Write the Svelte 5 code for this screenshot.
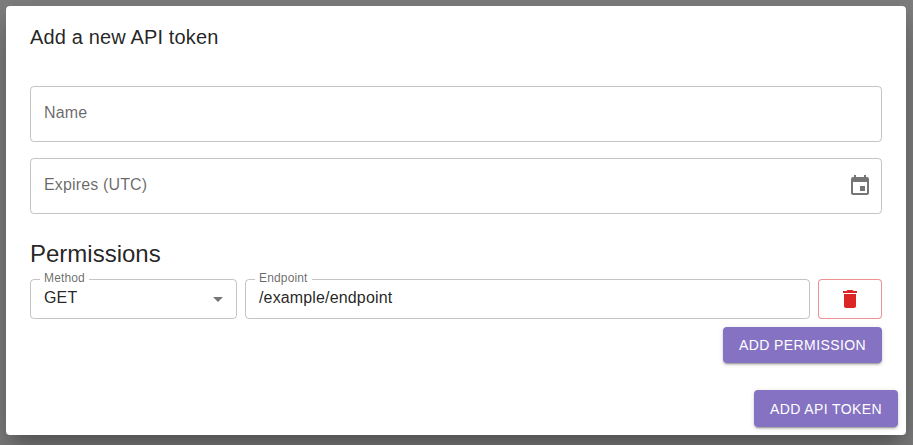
<script>
  let name = $state('');
  let expires = $state('');
  let endpoint = $state('/example/endpoint');
</script>

<div class="backdrop">
  <div class="dialog">
    <h2 class="title">Add a new API token</h2>

    <div class="content">
      <label class="field large">
        <input type="text" placeholder="Name" bind:value={name} />
      </label>

      <label class="field large">
        <input type="text" placeholder="Expires (UTC)" bind:value={expires} />
        <svg class="calendar" viewBox="0 0 24 24" width="24" height="24" aria-hidden="true">
          <path d="M17 12h-5v5h5v-5zM16 1v2H8V1H6v2H5c-1.11 0-1.99.9-1.99 2L3 19c0 1.1.89 2 2 2h14c1.1 0 2-.9 2-2V5c0-1.1-.9-2-2-2h-1V1h-2zm3 18H5V8h14v11z" />
        </svg>
      </label>

      <h3 class="heading">Permissions</h3>

      <div class="permission">
        <div class="field small method">
          <span class="legend">Method</span>
          <span class="value">GET</span>
          <svg class="arrow" viewBox="0 0 24 24" width="24" height="24" aria-hidden="true">
            <path d="M7 10l5 5 5-5z" />
          </svg>
        </div>
        <label class="field small endpoint">
          <span class="legend">Endpoint</span>
          <input type="text" bind:value={endpoint} />
        </label>
        <button class="delete" aria-label="Delete permission">
          <svg viewBox="0 0 24 24" width="24" height="24" aria-hidden="true">
            <path d="M6 19c0 1.1.9 2 2 2h8c1.1 0 2-.9 2-2V7H6v12zM19 4h-3.5l-1-1h-5l-1 1H5v2h14V4z" />
          </svg>
        </button>
      </div>

      <div class="add-row">
        <button class="primary permission-btn">Add permission</button>
      </div>
    </div>

    <div class="actions">
      <button class="primary token-btn">Add API token</button>
    </div>
  </div>
</div>

<style>
  :global(body) {
    font-family: "Liberation Sans", Arial, sans-serif;
    background: #808080;
  }

  .backdrop {
    height: 445px;
    box-sizing: border-box;
    padding: 6px 7px 10px 6px;
    background: #808080;
    overflow: hidden;
  }

  .dialog {
    height: 429px;
    box-sizing: border-box;
    background: #fff;
    border-radius: 4px;
    display: flex;
    flex-direction: column;
    box-shadow: 0 11px 15px -7px rgba(0, 0, 0, 0.2), 0 24px 38px 3px rgba(0, 0, 0, 0.14), 0 9px 46px 8px rgba(0, 0, 0, 0.12);
  }

  .title {
    margin: 0;
    padding: 15px 24px 17px;
    font-size: 20px;
    font-weight: 400;
    line-height: 32px;
    letter-spacing: 0.15px;
    color: rgba(0, 0, 0, 0.87);
  }

  .content {
    flex: 1;
    padding: 16px 24px 0;
    display: flex;
    flex-direction: column;
  }

  .field {
    position: relative;
    display: flex;
    align-items: center;
    box-sizing: border-box;
    border: 1px solid rgba(0, 0, 0, 0.23);
    border-radius: 4px;
    color: rgba(0, 0, 0, 0.87);
  }

  .large {
    height: 56px;
    margin-bottom: 16px;
    padding: 0 13px;
  }

  .small {
    height: 40px;
    padding: 0 13px;
  }

  input {
    flex: 1;
    min-width: 0;
    border: none;
    outline: none;
    padding: 0 0 2px;
    background: none;
    font: inherit;
    font-size: 16px;
    letter-spacing: 0.15px;
    color: rgba(0, 0, 0, 0.87);
  }

  input::placeholder {
    color: rgba(0, 0, 0, 0.6);
    opacity: 1;
  }

  .calendar {
    flex: none;
    margin-right: -4px;
    fill: rgba(0, 0, 0, 0.54);
  }

  .heading {
    margin: 8px 0 0;
    font-size: 24px;
    font-weight: 400;
    line-height: 32px;
    color: rgba(0, 0, 0, 0.87);
  }

  .permission {
    display: flex;
    gap: 8px;
    margin-top: 9px;
  }

  .legend {
    position: absolute;
    top: -8px;
    left: 9px;
    padding: 0 4px;
    background: #fff;
    font-size: 12px;
    line-height: 12px;
    letter-spacing: 0.15px;
    color: rgba(0, 0, 0, 0.6);
  }

  .method {
    width: 207px;
    justify-content: space-between;
  }

  .value {
    padding-bottom: 2px;
    font-size: 16px;
    letter-spacing: 0.15px;
  }

  .arrow {
    margin-right: -7px;
    fill: rgba(0, 0, 0, 0.54);
  }

  .endpoint {
    flex: 1;
  }

  .delete {
    width: 64px;
    height: 40px;
    padding: 0;
    display: flex;
    align-items: center;
    justify-content: center;
    background: #fff;
    border: 1px solid rgba(220, 38, 38, 0.5);
    border-radius: 4px;
  }

  .delete svg {
    fill: #dc2626;
  }

  .add-row {
    display: flex;
    justify-content: flex-end;
    margin-top: 8px;
  }

  .primary {
    height: 36px;
    padding: 0 16px;
    border: none;
    border-radius: 4px;
    background: #8572c2;
    color: #fff;
    font: inherit;
    font-size: 14px;
    letter-spacing: 0.4px;
    text-transform: uppercase;
    box-shadow: 0 3px 1px -2px rgba(0, 0, 0, 0.2), 0 2px 2px 0 rgba(0, 0, 0, 0.14), 0 1px 5px 0 rgba(0, 0, 0, 0.12);
  }

  .actions {
    display: flex;
    justify-content: flex-end;
    padding: 0 8px 8px;
  }

  .token-btn {
    height: 37px;
  }
</style>
